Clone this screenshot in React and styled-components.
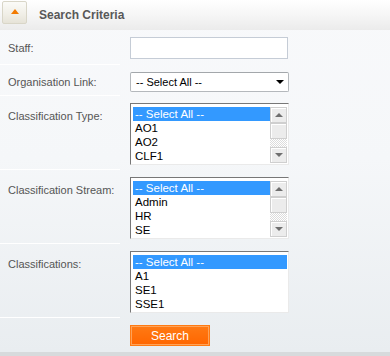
import React from 'react';
import styled, { createGlobalStyle } from 'styled-components';

const GlobalStyle = createGlobalStyle`
    html, body {
        margin: 0;
        padding: 0;
        background: #ffffff;
        font-family: "Liberation Sans", Arial, sans-serif;
    }
`;

const Panel = styled.div`
    width: 390px;
    height: 356px;
    display: flex;
    flex-direction: column;
    overflow: hidden;
    background: linear-gradient(to bottom, #f8f9fb 0%, #f5f7f9 45%, #e9edf0 100%);
    border-bottom: 4px solid #d7dadc;
    box-sizing: border-box;
`;

const Header = styled.div`
    height: 30px;
    display: flex;
    align-items: flex-start;
    background: linear-gradient(to bottom, #ffffff 0%, #f6f6f6 50%, #ebebeb 100%);
    box-sizing: border-box;
`;

const ToggleButton = styled.div`
    width: 25px;
    height: 23px;
    margin: 1px 0 0 2px;
    border: 1px solid #d9d6c8;
    border-radius: 2px;
    background: linear-gradient(to bottom, #fbfbf8 0%, #f0eee6 60%, #e6e3d8 100%);
    box-sizing: border-box;
    display: flex;
    align-items: center;
    justify-content: center;
    padding-bottom: 3px;
`;

const Title = styled.span`
    margin: 8px 0 0 12px;
    font-size: 12px;
    font-weight: bold;
    color: #585858;
`;

const Row = styled.div`
    display: flex;
`;

const LabelCell = styled.div`
    width: 120px;
    flex: none;
    padding: ${(p) => p.$top || 10}px 0 0 8px;
    box-sizing: border-box;
    font-size: 11px;
    color: #555555;
    border-bottom: ${(p) => (p.$last ? 'none' : '1px solid #ffffff')};
`;

const FieldCell = styled.div`
    padding: 7px 0 ${(p) => p.$bottom || 5}px 10px;
    display: flex;
    align-items: flex-start;
`;

const TextInput = styled.input`
    width: 158px;
    height: 22px;
    border: 1px solid #c5ccd6;
    background: #ffffff;
    box-sizing: border-box;
    margin: 0;
    padding: 0 3px;
    outline: none;
`;

const Dropdown = styled.div`
    width: 159px;
    height: 20px;
    border: 1px solid #b4b8bc;
    border-top-color: #a3a7ab;
    border-radius: 2px;
    background: #ffffff;
    box-sizing: border-box;
    display: flex;
    align-items: center;
    justify-content: space-between;
    padding: 0 4px 0 5px;
    font-size: 11px;
    color: #000000;
`;

const Caret = styled.span`
    width: 0;
    height: 0;
    border-left: ${(p) => p.$size || 4}px solid transparent;
    border-right: ${(p) => p.$size || 4}px solid transparent;
    border-top: ${(p) => (p.$up ? 'none' : `${p.$h || 4}px solid ${p.$color || '#000'}`)};
    border-bottom: ${(p) => (p.$up ? `${p.$h || 4}px solid ${p.$color || '#000'}` : 'none')};
`;

const ListBox = styled.div`
    width: 159px;
    height: 62px;
    border: 1px solid #eaeaea;
    border-top-color: #777777;
    border-left-color: #777777;
    background: #ffffff;
    box-sizing: border-box;
    padding: 3px 1px 0 2px;
    display: flex;
`;

const Options = styled.div`
    flex: 1;
    display: flex;
    flex-direction: column;
`;

const Option = styled.div`
    height: 14px;
    line-height: 14px;
    padding-left: 2px;
    font-size: 11.5px;
    color: ${(p) => (p.$selected ? '#ffffff' : '#000000')};
    background: ${(p) => (p.$selected ? '#3399ff' : 'transparent')};
    white-space: nowrap;
`;

const ScrollBar = styled.div`
    width: 17px;
    height: 56px;
    display: flex;
    flex-direction: column;
`;

const ScrollButton = styled.div`
    height: 16px;
    border: 1px solid #cfcfcf;
    box-shadow: inset 1px 1px 0 #ffffff;
    background: #ececec;
    box-sizing: border-box;
    display: flex;
    align-items: center;
    justify-content: center;
`;

const Thumb = styled.div`
    height: 16px;
    border: 1px solid #cfcfcf;
    box-shadow: inset 1px 1px 0 #ffffff;
    background: #ececec;
    box-sizing: border-box;
`;

const Track = styled.div`
    flex: 1;
    background: repeating-conic-gradient(#dcdcdc 0 25%, #ffffff 0 50%) 0 0 / 2px 2px;
`;

const SearchButton = styled.button`
    width: 80px;
    height: 21px;
    margin: 0;
    padding: 0;
    border: 1px solid #ff7a12;
    box-shadow: inset 0 0 0 1px #ffa257;
    background: linear-gradient(to bottom, #ff7a14 0%, #ff6600 100%);
    color: #ffffff;
    font-family: "Liberation Sans", Arial, sans-serif;
    font-size: 12px;
    cursor: pointer;
`;

const rows = [
    { label: 'Classification Type:', items: ['-- Select All --', 'AO1', 'AO2', 'CLF1'], scroll: true },
    { label: 'Classification Stream:', items: ['-- Select All --', 'Admin', 'HR', 'SE'], scroll: true },
    { label: 'Classifications:', items: ['-- Select All --', 'A1', 'SE1', 'SSE1'], scroll: false },
];

function MultiSelect({ items, scroll }) {
    return (
        <ListBox>
            <Options>
                {items.map((item, i) => (
                    <Option key={item} $selected={i === 0}>{item}</Option>
                ))}
            </Options>
            {scroll && (
                <ScrollBar>
                    <ScrollButton>
                        <Caret $up $size={4} $h={4} $color="#6f6f6f" />
                    </ScrollButton>
                    <Thumb />
                    <Track />
                    <ScrollButton>
                        <Caret $size={4} $h={4} $color="#6f6f6f" />
                    </ScrollButton>
                </ScrollBar>
            )}
        </ListBox>
    );
}

function App() {
    return (
        <>
            <GlobalStyle />
            <Panel>
                <Header>
                    <ToggleButton>
                        <Caret $up $size={4} $h={5} $color="#f27a00" />
                    </ToggleButton>
                    <Title>Search Criteria</Title>
                </Header>

                <Row>
                    <LabelCell $top={12}>Staff:</LabelCell>
                    <FieldCell $bottom={6}>
                        <TextInput type="text" />
                    </FieldCell>
                </Row>

                <Row>
                    <LabelCell $top={11}>Organisation Link:</LabelCell>
                    <FieldCell $bottom={4}>
                        <Dropdown>
                            <span>-- Select All --</span>
                            <Caret $size={4} $h={4} />
                        </Dropdown>
                    </FieldCell>
                </Row>

                {rows.map((row) => (
                    <Row key={row.label}>
                        <LabelCell $top={14}>{row.label}</LabelCell>
                        <FieldCell $bottom={5}>
                            <MultiSelect items={row.items} scroll={row.scroll} />
                        </FieldCell>
                    </Row>
                ))}

                <Row>
                    <LabelCell $last />
                    <FieldCell>
                        <SearchButton>Search</SearchButton>
                    </FieldCell>
                </Row>
            </Panel>
        </>
    );
}

export default App;
